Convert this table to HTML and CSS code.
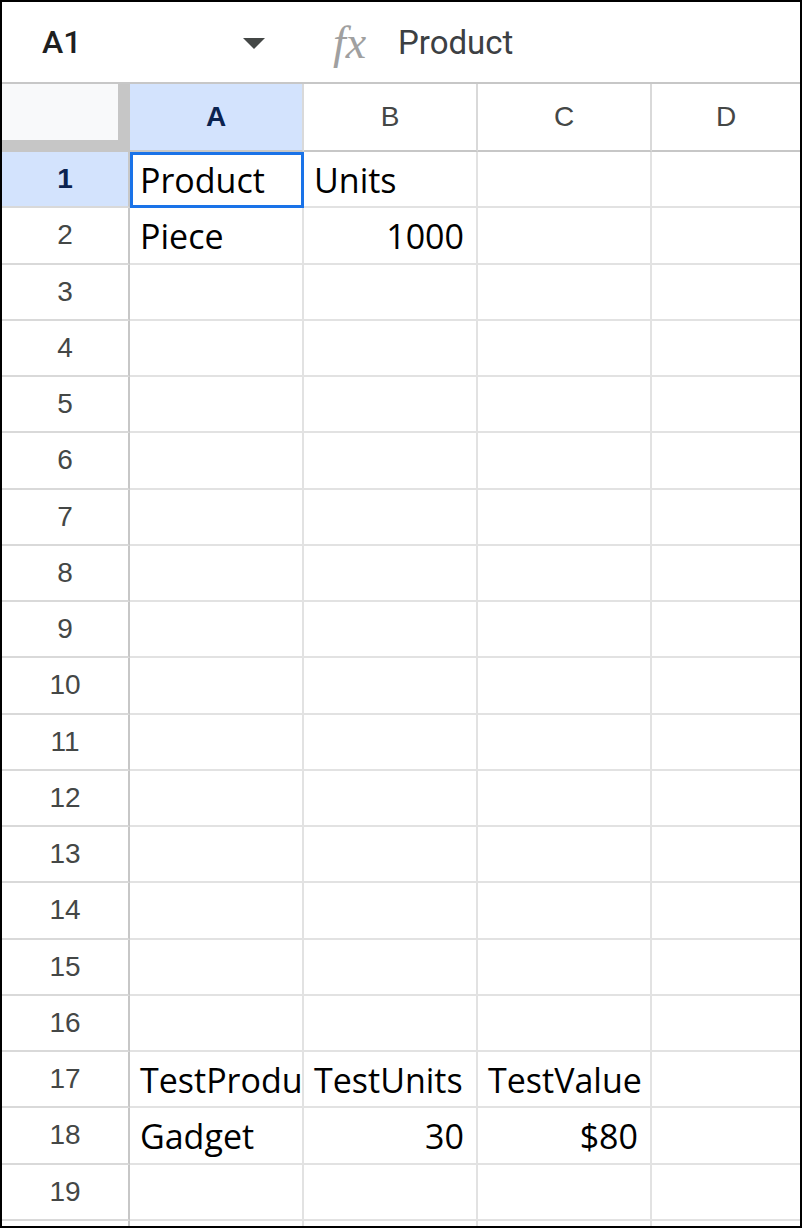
FILE: index.html
```html
<!DOCTYPE html>
<html>
<head>
<meta charset="utf-8">
<link rel="stylesheet" href="styles.css">
</head>
<body>
<div class="frame">
  <div class="toolbar">
    <div class="namebox">
      <span class="ref">A1</span>
      <svg class="caret" width="22" height="11" viewBox="0 0 22 11"><path d="M0 0 L22 0 L11 11 Z" fill="#444746"/></svg>
    </div>
    <span class="fx">fx</span>
    <span class="formula">Product</span>
  </div>
  <div class="grid">
    <div class="corner"></div>
    <div class="colhead active">A</div>
    <div class="colhead">B</div>
    <div class="colhead">C</div>
    <div class="colhead last">D</div>

    <div class="rowhead active">1</div>
    <div class="cell selected">Product</div>
    <div class="cell">Units</div>
    <div class="cell"></div>
    <div class="cell last"></div>

    <div class="rowhead">2</div>
    <div class="cell">Piece</div>
    <div class="cell num">1000</div>
    <div class="cell"></div>
    <div class="cell last"></div>

    <div class="rowhead">3</div><div class="cell"></div><div class="cell"></div><div class="cell"></div><div class="cell last"></div>
    <div class="rowhead">4</div><div class="cell"></div><div class="cell"></div><div class="cell"></div><div class="cell last"></div>
    <div class="rowhead">5</div><div class="cell"></div><div class="cell"></div><div class="cell"></div><div class="cell last"></div>
    <div class="rowhead">6</div><div class="cell"></div><div class="cell"></div><div class="cell"></div><div class="cell last"></div>
    <div class="rowhead">7</div><div class="cell"></div><div class="cell"></div><div class="cell"></div><div class="cell last"></div>
    <div class="rowhead">8</div><div class="cell"></div><div class="cell"></div><div class="cell"></div><div class="cell last"></div>
    <div class="rowhead">9</div><div class="cell"></div><div class="cell"></div><div class="cell"></div><div class="cell last"></div>
    <div class="rowhead">10</div><div class="cell"></div><div class="cell"></div><div class="cell"></div><div class="cell last"></div>
    <div class="rowhead">11</div><div class="cell"></div><div class="cell"></div><div class="cell"></div><div class="cell last"></div>
    <div class="rowhead">12</div><div class="cell"></div><div class="cell"></div><div class="cell"></div><div class="cell last"></div>
    <div class="rowhead">13</div><div class="cell"></div><div class="cell"></div><div class="cell"></div><div class="cell last"></div>
    <div class="rowhead">14</div><div class="cell"></div><div class="cell"></div><div class="cell"></div><div class="cell last"></div>
    <div class="rowhead">15</div><div class="cell"></div><div class="cell"></div><div class="cell"></div><div class="cell last"></div>
    <div class="rowhead">16</div><div class="cell"></div><div class="cell"></div><div class="cell"></div><div class="cell last"></div>

    <div class="rowhead">17</div>
    <div class="cell">TestProduct</div>
    <div class="cell">TestUnits</div>
    <div class="cell">TestValue</div>
    <div class="cell last"></div>

    <div class="rowhead">18</div>
    <div class="cell">Gadget</div>
    <div class="cell num">30</div>
    <div class="cell num">$80</div>
    <div class="cell last"></div>

    <div class="rowhead">19</div><div class="cell"></div><div class="cell"></div><div class="cell"></div><div class="cell last"></div>
    <div class="rowhead"></div><div class="cell"></div><div class="cell"></div><div class="cell"></div><div class="cell last"></div>
  </div>
</div>
</body>
</html>
```
FILE: styles.css
```css
html, body {
  margin: 0;
  padding: 0;
  background: #ffffff;
}

.frame {
  box-sizing: border-box;
  width: 802px;
  height: 1228px;
  border: 2px solid #000;
  overflow: hidden;
  background: #fff;
}

.toolbar {
  box-sizing: border-box;
  height: 82px;
  border-bottom: 2px solid #c7c7c7;
  display: flex;
  align-items: center;
}

.namebox {
  box-sizing: border-box;
  width: 263px;
  padding-left: 40px;
  display: flex;
  align-items: center;
  justify-content: space-between;
}

.ref {
  font-family: Roboto, "Liberation Sans", sans-serif;
  font-weight: 500;
  font-size: 32px;
  color: #1f1f1f;
}

.caret {
  display: block;
  margin-top: 2px;
}

.fx {
  margin-left: 68px;
  width: 42px;
  font-family: "Liberation Serif", serif;
  font-style: italic;
  font-size: 46px;
  color: #a0a0a0;
  line-height: 1;
  margin-top: 2px;
}

.formula {
  margin-left: 23px;
  font-family: Roboto, "Liberation Sans", sans-serif;
  font-size: 33px;
  color: #3c4043;
}

.grid {
  display: grid;
  grid-template-columns: 128px 174px 174px 174px 148px;
  grid-auto-rows: 56.25px;
  grid-template-rows: 68px;
}

.corner {
  box-sizing: border-box;
  background: #f8f9fa;
  border-right: 12px solid #c6c6c6;
  border-bottom: 12px solid #c6c6c6;
}

.colhead {
  box-sizing: border-box;
  border-right: 2px solid #d9d9d9;
  border-bottom: 2px solid #c7c7c7;
  display: flex;
  align-items: center;
  justify-content: center;
  font-family: "Liberation Sans", Arial, sans-serif;
  font-size: 28px;
  color: #444746;
  background: #fff;
}

.colhead.active {
  background: #d3e3fd;
  color: #0b2350;
  font-weight: bold;
}

.rowhead {
  box-sizing: border-box;
  border-right: 2px solid #c7c7c7;
  border-bottom: 2px solid #d9d9d9;
  display: flex;
  align-items: center;
  justify-content: center;
  font-family: "Liberation Sans", Arial, sans-serif;
  font-size: 28px;
  color: #444746;
  background: #fff;
}

.rowhead.active {
  background: #d3e3fd;
  color: #0b2350;
  font-weight: bold;
}

.cell {
  box-sizing: border-box;
  border-right: 2px solid #e2e2e2;
  border-bottom: 2px solid #e2e2e2;
  padding: 0 10px;
  font-family: "Open Sans", "Noto Sans", sans-serif;
  font-size: 34px;
  font-weight: 500;
  line-height: 56px;
  color: #000;
  white-space: nowrap;
  overflow: hidden;
  background: #fff;
}

.cell.num {
  text-align: right;
  padding-right: 12px;
}

.cell.last {
  border-right: none;
}

.colhead.last {
  border-right: none;
}

.cell.selected {
  outline: 3px solid #1a73e8;
  outline-offset: -3px;
}
```
